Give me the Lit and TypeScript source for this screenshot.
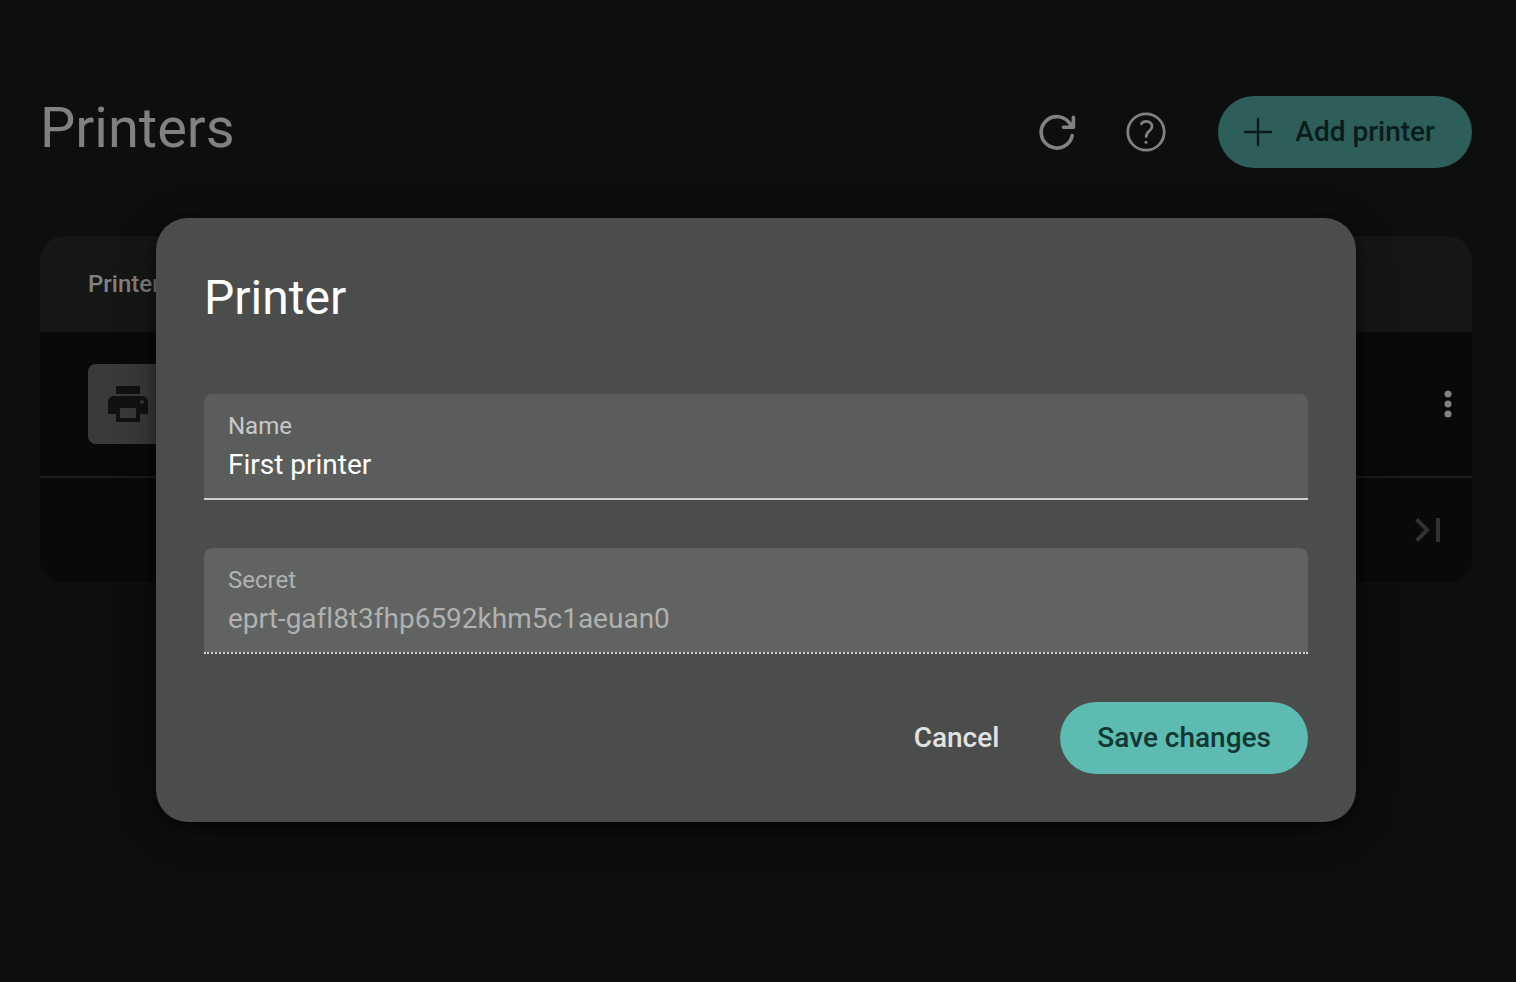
import { LitElement, html, css } from "lit";
import { customElement, state } from "lit/decorators.js";

@customElement("printer-table")
class PrinterTable extends LitElement {
  static styles = css`
    :host {
      display: block;
      border-radius: 24px;
      overflow: hidden;
      background: #080a09;
      color: #818181;
    }
    .table {
      width: 100%;
      border-collapse: collapse;
    }
    .head-cell {
      height: 96px;
      padding: 0 48px;
      background: #151716;
      font-size: 24px;
      font-weight: 500;
      line-height: 32px;
      text-align: left;
    }
    .cell {
      padding: 32px 48px;
      border-bottom: 2px solid #1b1d1c;
    }
    .actions {
      padding: 0;
      text-align: right;
    }
    .avatar {
      display: grid;
      place-items: center;
      width: 80px;
      height: 80px;
      border-radius: 8px;
      background: #3a3a3a;
    }
    .icon {
      display: block;
      width: 48px;
      height: 48px;
      fill: currentColor;
    }
    .printer-icon {
      color: #101211;
    }
    .icon-button {
      display: inline-block;
      padding: 24px 0;
      border: 0;
      background: none;
      color: inherit;
      vertical-align: middle;
    }
    .pager {
      display: flex;
      justify-content: flex-end;
      padding: 4px 20px;
      color: #313332;
    }
  `;

  render() {
    return html`
      <table class="table">
        <thead>
          <tr>
            <th class="head-cell" colspan="2" scope="col">Printer</th>
          </tr>
        </thead>
        <tbody>
          <tr>
            <td class="cell">
              <span class="avatar">
                <svg class="icon printer-icon" viewBox="0 0 24 24" aria-hidden="true">
                  <path
                    d="M19 8H5c-1.66 0-3 1.34-3 3v6h4v4h12v-4h4v-6c0-1.66-1.34-3-3-3zm-3 11H8v-5h8v5zm3-7c-.55 0-1-.45-1-1s.45-1 1-1 1 .45 1 1-.45 1-1 1zm-1-9H6v4h12V3z"
                  />
                </svg>
              </span>
            </td>
            <td class="cell actions">
              <button class="icon-button" type="button" aria-label="Printer actions">
                <svg class="icon" viewBox="0 0 24 24" aria-hidden="true">
                  <circle cx="12" cy="7" r="1.75" />
                  <circle cx="12" cy="12" r="1.75" />
                  <circle cx="12" cy="17" r="1.75" />
                </svg>
              </button>
            </td>
          </tr>
        </tbody>
      </table>
      <div class="pager">
        <button class="icon-button" type="button" aria-label="Last page" disabled>
          <svg class="icon" viewBox="0 0 24 24" aria-hidden="true">
            <path d="M5.59 7.41L10.18 12l-4.59 4.59L7 18l6-6-6-6zM16 6h2v12h-2z" />
          </svg>
        </button>
      </div>
    `;
  }
}

@customElement("printer-dialog")
class PrinterDialog extends LitElement {
  @state() name = "First printer";
  @state() secret = "eprt-gafl8t3fhp6592khm5c1aeuan0";

  static styles = css`
    :host {
      display: block;
      width: 100%;
      max-width: 1200px;
    }
    .panel {
      padding: 48px;
      border-radius: 32px;
      background: #4b4d4c;
      box-shadow:
        0 4px 10px rgba(0, 0, 0, 0.4),
        0 8px 40px rgba(0, 0, 0, 0.4);
    }
    .title {
      margin: 0 0 64px;
      color: #fff;
      font-size: 48px;
      font-weight: 400;
      line-height: 64px;
    }
    .form {
      display: grid;
      gap: 48px;
    }
    .field {
      display: grid;
      padding: 16px 24px 12px;
      border-bottom: 2px solid #cfd0cf;
      border-radius: 8px 8px 0 0;
      background: #5b5d5c;
    }
    .label {
      color: #c9cac9;
      font-size: 24px;
      line-height: 32px;
    }
    .input {
      width: 100%;
      height: 44px;
      box-sizing: border-box;
      padding: 0;
      border: 0;
      outline: 0;
      background: none;
      color: #fff;
      font: inherit;
      font-size: 28px;
      font-variant-ligatures: none;
    }
    .locked {
      border-bottom-style: dotted;
      background: #616362;
      background-clip: padding-box;
    }
    .locked .label,
    .locked .input {
      color: #b0b1b0;
    }
    .buttons {
      display: flex;
      justify-content: flex-end;
      gap: 24px;
    }
    .button {
      height: 72px;
      padding: 0 37px 2px;
      border: 0;
      border-radius: 36px;
      background: none;
      color: #e1e2e1;
      font: inherit;
      font-size: 28px;
      font-weight: 500;
    }
    .primary {
      background: #5dbbb1;
      color: #123733;
    }
  `;

  private rename(e: Event) {
    this.name = (e.target as HTMLInputElement).value;
  }

  render() {
    return html`
      <section class="panel" role="dialog" aria-modal="true" aria-labelledby="title">
        <h2 class="title" id="title">Printer</h2>
        <form class="form" @submit=${(e: Event) => e.preventDefault()}>
          <div class="field">
            <label class="label" for="name">Name</label>
            <input class="input" id="name" type="text" .value=${this.name} @input=${this.rename} />
          </div>
          <div class="field locked">
            <label class="label" for="secret">Secret</label>
            <input class="input" id="secret" type="text" disabled .value=${this.secret} />
          </div>
          <div class="buttons">
            <button class="button" type="button">Cancel</button>
            <button class="button primary" type="submit">Save changes</button>
          </div>
        </form>
      </section>
    `;
  }
}

@customElement("app-root")
class AppRoot extends LitElement {
  static styles = css`
    :host {
      display: block;
      position: relative;
      min-height: 100vh;
      background: #0d0f0e;
      color: #818181;
      font-family: Roboto, sans-serif;
    }
    .page {
      padding: 96px 44px 0 40px;
    }
    .header {
      display: flex;
      justify-content: space-between;
      align-items: flex-start;
      margin-bottom: 68px;
    }
    .heading {
      margin: 0;
      font-size: 56px;
      font-weight: 400;
      line-height: 64px;
    }
    .tools {
      display: flex;
      align-items: center;
      gap: 8px;
    }
    .tool {
      display: grid;
      place-items: center;
      width: 80px;
      height: 72px;
      padding: 0;
      border: 0;
      background: none;
      color: inherit;
    }
    .icon {
      width: 48px;
      height: 48px;
      fill: none;
      stroke: currentColor;
      stroke-linecap: round;
      stroke-linejoin: round;
    }
    .add {
      display: flex;
      align-items: center;
      gap: 13px;
      height: 72px;
      margin-left: 24px;
      padding: 0 37px 0 16px;
      border: 0;
      border-radius: 36px;
      background: #2e5e59;
      color: #091c1a;
      font: inherit;
      font-size: 28px;
      font-weight: 500;
    }
    .add-label {
      padding-bottom: 2px;
    }
    .overlay {
      position: absolute;
      inset: 0;
      display: flex;
      align-items: center;
      justify-content: center;
      padding: 58px 44px 0 40px;
    }
  `;

  render() {
    return html`
      <main class="page">
        <header class="header">
          <h1 class="heading">Printers</h1>
          <div class="tools">
            <button class="tool" type="button" aria-label="Refresh">
              <svg class="icon" viewBox="0 0 48 48" stroke-width="3.6" aria-hidden="true">
                <path d="M38.2 27.6A15.7 15.7 0 1 1 36.4 16.4L39 19" />
                <path d="M39.4 9.2V19.2H29.4" />
                <path d="M36 16L39.2 19.2L39.2 14Z" stroke-width="1.5" fill="currentColor" />
              </svg>
            </button>
            <button class="tool" type="button" aria-label="Help">
              <svg class="icon" viewBox="0 0 48 48" stroke-width="2.8" aria-hidden="true">
                <circle cx="24" cy="24" r="18.2" />
                <path
                  d="M19.4 15.8C20.2 14.2 22 13.4 24.2 13.4C27.6 13.4 30 15.6 30 18.4C30 23.2 24.2 23 24.2 28.6"
                />
                <circle cx="24" cy="34.2" r="1.5" fill="currentColor" stroke="none" />
              </svg>
            </button>
            <button class="add" type="button">
              <svg class="icon" viewBox="0 0 48 48" stroke-width="2.4" aria-hidden="true">
                <path d="M24 11V37M11 24H37" />
              </svg>
              <span class="add-label">Add printer</span>
            </button>
          </div>
        </header>
        <printer-table></printer-table>
      </main>
      <div class="overlay">
        <printer-dialog></printer-dialog>
      </div>
    `;
  }
}
